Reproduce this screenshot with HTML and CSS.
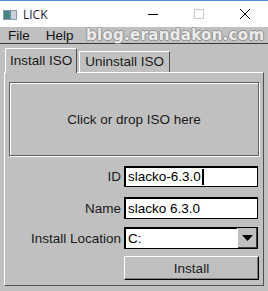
FILE: index.html
```html
<!DOCTYPE html>
<html>
<head>
<meta charset="utf-8">
<link rel="stylesheet" href="styles.css">
</head>
<body>
<div class="window">
  <div class="titlebar">
    <svg class="appicon" width="14" height="10" viewBox="0 0 14 10">
      <rect x="0" y="0" width="14" height="10" fill="#8c9aa6"/>
      <rect x="1" y="1" width="12" height="8" fill="#5e8f9a"/>
      <rect x="1" y="1" width="5" height="8" fill="#4f7f8c"/>
      <rect x="8" y="1" width="5" height="8" fill="#c8d2d8"/>
      <rect x="3" y="3" width="3" height="4" fill="#3d8a6a"/>
    </svg>
    <span class="title">LICK</span>
    <div class="controls">
      <span class="ctl min"><svg width="10" height="10" viewBox="0 0 10 10"><line x1="0" y1="5.5" x2="10" y2="5.5" stroke="#000" stroke-width="1"/></svg></span>
      <span class="ctl max"><svg width="10" height="10" viewBox="0 0 10 10"><rect x="0.5" y="0.5" width="9" height="9" fill="none" stroke="#c8c8c8" stroke-width="1"/></svg></span>
      <span class="ctl close"><svg width="10" height="10" viewBox="0 0 10 10"><path d="M0 0 L10 10 M10 0 L0 10" stroke="#000" stroke-width="1"/></svg></span>
    </div>
  </div>
  <div class="menubar">
    <span class="menu">File</span>
    <span class="menu">Help</span>
    <span class="watermark">blog.erandakon.com</span>
  </div>
  <div class="body">
    <div class="tabs">
      <div class="tab active">Install ISO</div>
      <div class="tab">Uninstall ISO</div>
    </div>
    <div class="panel">
      <div class="dropzone">Click or drop ISO here</div>
      <div class="form">
        <label class="lbl">ID</label>
        <div class="field row-id"><span>slacko-6.3.0</span><span class="caret"></span></div>
        <label class="lbl">Name</label>
        <div class="field row-name"><span>slacko 6.3.0</span></div>
        <label class="lbl">Install Location</label>
        <div class="field select"><span class="val">C:</span><span class="arrow"><svg width="11" height="6" viewBox="0 0 11 6"><path d="M0 0 H11 L5.5 6 Z" fill="#000"/></svg></span></div>
        <span></span>
        <div class="button">Install</div>
      </div>
    </div>
  </div>
</div>
</body>
</html>
```

FILE: styles.css
```css
* { box-sizing: border-box; }
html, body { margin: 0; padding: 0; }
body {
  width: 268px;
  height: 291px;
  overflow: hidden;
  background: #c0c0c0;
  font-family: "Liberation Sans", Arial, sans-serif;
  font-size: 13px;
  color: #1a1a1a;
}
.window { width: 268px; height: 291px; display: flex; flex-direction: column; }
.titlebar {
  height: 27px;
  background: #fff;
  border-top: 1px solid #4a90d9;
  display: flex;
  align-items: center;
  position: relative;
}
.appicon { margin-left: 3px; margin-top: 1px; }
.title {
  margin-left: 6px;
  font-family: "Open Sans", "Noto Sans", sans-serif;
  font-size: 12px;
  color: #1a1a3a;
}
.controls { margin-left: auto; display: flex; height: 100%; }
.ctl { width: 46px; display: flex; align-items: center; justify-content: center; }
.ctl svg { display: block; }
.menubar {
  height: 17px;
  background: #c0c0c0;
  border-bottom: 1px solid #3a3a3a;
  display: flex;
  align-items: center;
  position: relative;
  padding-left: 8px;
}
.menu { margin-right: 16px; line-height: 17px; font-size: 13.5px; color: #111; }
.watermark {
  position: absolute;
  left: 86px;
  top: -1px;
  font-family: "DejaVu Sans", sans-serif;
  font-weight: bold;
  font-size: 15px;
  letter-spacing: 0.3px;
  color: #ececec;
  text-shadow: 1px 0 0 #939393, -1px 0 0 #939393, 0 1px 0 #939393, 0 -1px 0 #939393;
}
.body { flex: 1; padding: 4px 4px 5px 4px; display: flex; flex-direction: column; }
.tabs { display: flex; align-items: flex-end; height: 24px; padding-left: 1px; }
.tab {
  height: 21px;
  padding: 0 5px;
  border-top: 1px solid #fff;
  border-left: 1px solid #fff;
  border-right: 1px solid #505050;
  line-height: 20px;
  font-size: 13.5px;
  margin-left: 2px;
}
.tab.active {
  height: 25px;
  margin-left: 0;
  position: relative;
  top: 1px;
  background: #c0c0c0;
  line-height: 24px;
  padding: 0 4px;
  z-index: 1;
}
.panel {
  flex: 1;
  border-top: 1px solid #fff;
  border-left: 1px solid #fff;
  border-right: 1px solid #505050;
  border-bottom: 1px solid #505050;
  padding: 9px 4px 0 4px;
}
.dropzone {
  height: 74px;
  border: 1px solid #606060;
  box-shadow: inset 1px 1px 0 #fff, 1px 1px 0 #fff;
  display: flex;
  align-items: center;
  justify-content: center;
  font-size: 13.5px;
  color: #1a1a1a;
}
.form {
  display: grid;
  grid-template-columns: 1fr 134px;
  column-gap: 3px;
  margin-top: 10px;
  margin-right: 1px;
  align-items: center;
}
.lbl { text-align: right; font-size: 13.5px; }
.field {
  height: 21px;
  background: #fff;
  border: 1px solid #000;
  box-shadow: inset 1px 1px 0 #000;
  display: flex;
  align-items: center;
  padding-left: 3px;
  font-size: 13.5px;
  color: #000;
}
.caret { width: 2px; height: 16px; background: #000; margin-left: 1px; }
.row-name { height: 22px; margin-top: 10px; }
.form > .lbl:nth-child(3) { margin-top: 10px; }
.select { height: 22px; margin-top: 8px; padding-right: 0; }
.form > .lbl:nth-child(5) { margin-top: 8px; }
.select .val { flex: 1; }
.arrow {
  width: 20px;
  height: 100%;
  background: #c0c0c0;
  border-left: 1px solid #fff;
  box-shadow: inset -1px -1px 0 #404040;
  display: flex;
  align-items: center;
  justify-content: center;
}
.button {
  grid-column: 2;
  height: 24px;
  margin-top: 7px;
  border-top: 1px solid #fff;
  border-left: 1px solid #fff;
  border-right: 1px solid #000;
  border-bottom: 1px solid #000;
  box-shadow: inset -1px -1px 0 #808080;
  display: flex;
  align-items: center;
  justify-content: center;
  font-size: 13.5px;
  margin-right: -1px;
}
```
